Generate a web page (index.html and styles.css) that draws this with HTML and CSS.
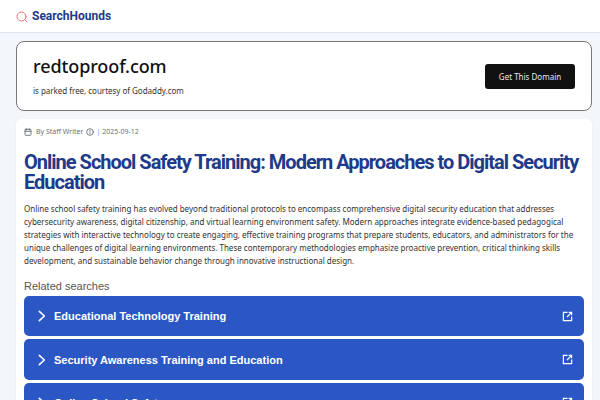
FILE: index.html
```html
<!DOCTYPE html>
<html lang="en">
<head>
<meta charset="utf-8">
<title>SearchHounds</title>
<link rel="stylesheet" href="styles.css">
</head>
<body>
<header class="site-header">
  <svg class="logo-icon" viewBox="0 0 24 24" width="12" height="12" fill="none" stroke="#f87171" stroke-width="2" stroke-linecap="round" stroke-linejoin="round"><circle cx="11" cy="11" r="9"/><path d="m22 22-4.3-4.3"/></svg>
  <span class="logo-text">SearchHounds</span>
</header>
<main class="page">
  <section class="parked">
    <div class="parked-info">
      <h2 class="parked-domain">redtoproof.com</h2>
      <p class="parked-note">is parked free, courtesy of Godaddy.com</p>
    </div>
    <a class="parked-btn">Get This Domain</a>
  </section>
  <article class="article">
    <div class="meta">
      <svg class="meta-icon" viewBox="0 0 24 24" width="8" height="8" fill="none" stroke="#4b5563" stroke-width="2.2" stroke-linecap="round" stroke-linejoin="round"><rect x="3" y="4" width="18" height="18" rx="2"/><path d="M16 2v4M8 2v4M3 10h18"/></svg>
      <span class="meta-author">By Staff Writer</span>
      <svg class="meta-icon" viewBox="0 0 24 24" width="8" height="8" fill="none" stroke="#4b5563" stroke-width="2.2" stroke-linecap="round" stroke-linejoin="round"><circle cx="12" cy="12" r="10"/><path d="M12 7v6"/><path d="M12 16.5v.5"/></svg>
      <span class="meta-sep">|</span>
      <span>2025-09-12</span>
    </div>
    <h1 class="title">Online School Safety Training: Modern Approaches to Digital Security Education</h1>
    <p class="summary">Online school safety training has evolved beyond traditional protocols to encompass comprehensive digital security education that addresses cybersecurity awareness, digital citizenship, and virtual learning environment safety. Modern approaches integrate evidence-based pedagogical strategies with interactive technology to create engaging, effective training programs that prepare students, educators, and administrators for the unique challenges of digital learning environments. These contemporary methodologies emphasize proactive prevention, critical thinking skills development, and sustainable behavior change through innovative instructional design.</p>
    <h3 class="related-title">Related searches</h3>
    <ul class="related">
      <li class="related-item">
        <svg class="chev" viewBox="0 0 24 24" width="16" height="16" fill="none" stroke="#fff" stroke-width="2.4" stroke-linecap="round" stroke-linejoin="round"><path d="m8 5 7.5 7-7.5 7"/></svg>
        <span class="related-label">Educational Technology Training</span>
        <svg class="ext" viewBox="0 0 24 24" width="11" height="11" fill="none" stroke="#fff" stroke-width="2.6" stroke-linejoin="miter"><path d="M12 3H3v18h18v-9"/><path d="M21 3 11 13"/><path d="M14.5 3H21v6.5"/></svg>
      </li>
      <li class="related-item">
        <svg class="chev" viewBox="0 0 24 24" width="16" height="16" fill="none" stroke="#fff" stroke-width="2.4" stroke-linecap="round" stroke-linejoin="round"><path d="m8 5 7.5 7-7.5 7"/></svg>
        <span class="related-label">Security Awareness Training and Education</span>
        <svg class="ext" viewBox="0 0 24 24" width="11" height="11" fill="none" stroke="#fff" stroke-width="2.6" stroke-linejoin="miter"><path d="M12 3H3v18h18v-9"/><path d="M21 3 11 13"/><path d="M14.5 3H21v6.5"/></svg>
      </li>
      <li class="related-item">
        <svg class="chev" viewBox="0 0 24 24" width="16" height="16" fill="none" stroke="#fff" stroke-width="2.4" stroke-linecap="round" stroke-linejoin="round"><path d="m8 5 7.5 7-7.5 7"/></svg>
        <span class="related-label">Online School Safety</span>
        <svg class="ext" viewBox="0 0 24 24" width="11" height="11" fill="none" stroke="#fff" stroke-width="2.6" stroke-linejoin="miter"><path d="M12 3H3v18h18v-9"/><path d="M21 3 11 13"/><path d="M14.5 3H21v6.5"/></svg>
      </li>
    </ul>
  </article>
</main>
</body>
</html>
```
FILE: styles.css
```css
* { box-sizing: border-box; margin: 0; padding: 0; }
html, body { height: 400px; overflow: hidden; }
body { background: #f3f6fb; font-family: "Noto Sans", sans-serif; color: #111; }
.site-header {
  height: 33px;
  background: #fff;
  border-bottom: 1px solid #dde1ea;
  display: flex;
  align-items: center;
  padding-left: 16px;
  gap: 4px;
}
.logo-icon { margin-top: 2px; }
.logo-text { font-family: Roboto, sans-serif; font-weight: 700; font-size: 12px; color: #1e3a8a; }
.page { padding: 8px 8px 0 16px; display: flex; flex-direction: column; gap: 8px; }
.parked {
  height: 70px;
  background: #fff;
  border: 1px solid #777;
  border-radius: 8px;
  display: flex;
  align-items: center;
  justify-content: space-between;
  padding: 0 16px;
}
.parked-domain { font-size: 18px; font-weight: 500; line-height: 24px; color: #111; letter-spacing: -0.1px; margin-top: -2px; }
.parked-note { font-size: 8px; line-height: 12px; margin-top: 7px; color: #333; letter-spacing: -0.02px; }
.parked-btn {
  width: 90px;
  height: 25px;
  background: #111;
  color: #e5e7eb;
  border-radius: 3px;
  font-size: 8px;
  display: flex;
  align-items: center;
  justify-content: center;
}
.article {
  background: #fff;
  border-radius: 6px;
  padding: 7px 8px 8px;
  box-shadow: 0 1px 3px rgba(0,0,0,.05);
  flex: 1;
}
.meta { display: flex; align-items: center; gap: 3px; font-size: 7px; line-height: 12px; color: #6b7280; }
.meta-author { margin-left: 1px; }
.meta-sep { color: #60a5fa; margin-left: -1px; margin-right: -1px; }
.title {
  font-family: Roboto, sans-serif;
  font-weight: 700;
  font-size: 20px;
  letter-spacing: -1px;
  line-height: 20px;
  color: #1e3a8a;
  margin-top: 14px;
}
.summary { font-size: 8px; line-height: 13px; color: #333; margin-top: 10px; }
.related-title {
  font-family: "Liberation Sans", sans-serif;
  font-size: 11px;
  font-weight: 400;
  line-height: 14px;
  color: #555;
  margin-top: 12px;
}
.related { list-style: none; display: flex; flex-direction: column; gap: 3px; margin-top: 3px; }
.related-item {
  height: 40.4px;
  background: #2b57c5;
  border-radius: 5px;
  display: flex;
  align-items: center;
  padding: 0 11px 0 10px;
  color: #fff;
}
.chev { flex: none; }
.related-label {
  flex: 1;
  margin-left: 4px;
  font-family: "Liberation Sans", sans-serif;
  font-weight: 700;
  font-size: 11px;
}
.ext { flex: none; }
```
